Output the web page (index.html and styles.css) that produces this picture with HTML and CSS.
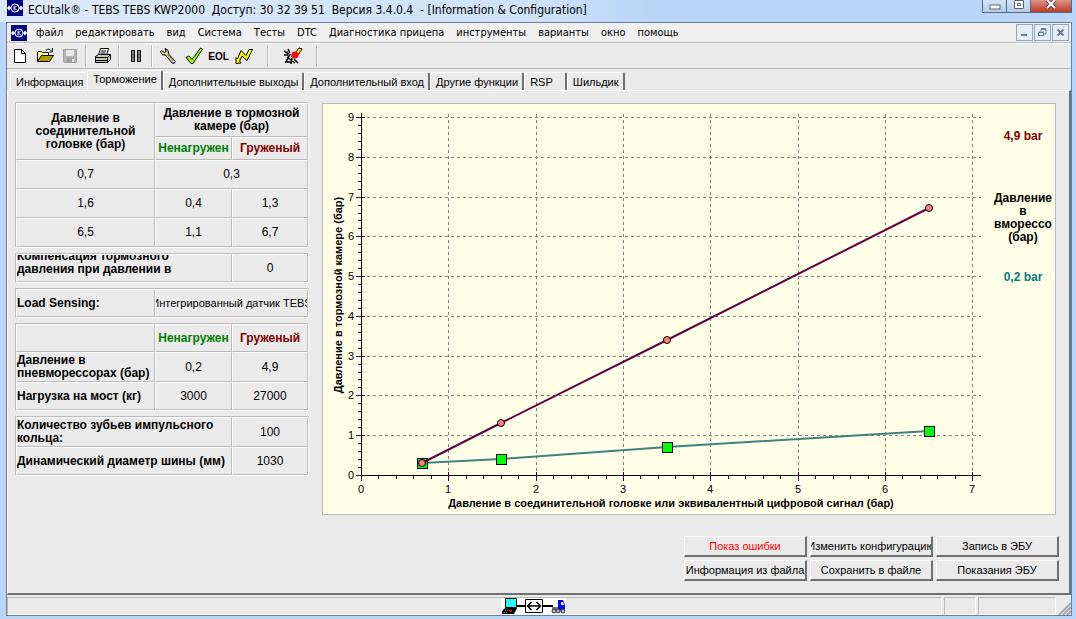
FILE: index.html
```html
<!DOCTYPE html>
<html lang="ru">
<head>
    <meta charset="UTF-8">
    <meta name="viewport" content="width=device-width, initial-scale=1.0">
    <title>ECUtalk - Information &amp; Configuration</title>
    <link rel="stylesheet" href="styles.css">
</head>
<body>
    <!-- logo shared by title bar and menu -->
    <svg class="defs" width="0" height="0" aria-hidden="true">
        <symbol id="logo" viewBox="0 0 16 16">
            <rect width="16" height="16" fill="#00007c"/>
            <circle cx="8" cy="8" r="4" fill="none" stroke="#fff" stroke-width="1"/>
            <path d="M7 5.500v5M10 5.500L7.500 8L10 10.500" fill="none" stroke="#fff"/>
            <path d="M0 8l2-2.500L4 8l-2 2.500zM12 8l2-2.500L16 8l-2 2.500z" fill="#fff"/>
        </symbol>
    </svg>

    <header class="titlebar">
        <svg class="logo"><use href="#logo"/></svg>
        <h1>ECUtalk® - TEBS TEBS KWP2000&nbsp; Доступ: 30 32 39 51&nbsp; Версия 3.4.0.4&nbsp; - [Information &amp; Configuration]</h1>
        <div class="win-buttons">
            <button class="win-btn" aria-label="Свернуть"><svg width="12" height="12"><rect x="1" y="5" width="10" height="4" fill="#fff" stroke="#5a6478"/></svg></button>
            <button class="win-btn" aria-label="Развернуть"><svg width="12" height="12"><path d="M1.500 .5h9v8h-9zM4.500 3.500h3v2h-3z" fill="#fff" stroke="#5a6478"/></svg></button>
            <button class="win-btn close" aria-label="Закрыть"><svg width="12" height="12"><path d="M2 0l8 8M10 0L2 8" stroke="#6a4050" stroke-width="4"/><path d="M2 0l8 8M10 0L2 8" stroke="#fff" stroke-width="2"/></svg></button>
        </div>
    </header>

    <div class="window">
        <nav class="menu">
            <svg class="logo"><use href="#logo"/></svg>
            <button>файл</button>
            <button>редактировать</button>
            <button>вид</button>
            <button>Система</button>
            <button>Тесты</button>
            <button>DTC</button>
            <button>Диагностика прицепа</button>
            <button>инструменты</button>
            <button>варианты</button>
            <button>окно</button>
            <button>помощь</button>
            <div class="mdi-buttons">
                <button class="mdi-btn" aria-label="Свернуть окно"><svg width="9" height="9"><path d="M1 7h6" stroke="#6c7c90" stroke-width="2"/></svg></button>
                <button class="mdi-btn" aria-label="Восстановить окно"><svg width="9" height="9"><path d="M.5 4.500h5v3h-5zM.5 4h5M3 2.500V1h5v5H6" fill="none" stroke="#6c7c90"/><path d="M3 1h5" stroke="#6c7c90" stroke-width="2"/></svg></button>
                <button class="mdi-btn" aria-label="Закрыть окно"><svg width="9" height="9"><path d="M1.500 1.500l6 6M7.500 1.500l-6 6" stroke="#6c7c90" stroke-width="2"/></svg></button>
            </div>
        </nav>

        <div class="toolbar">
            <button class="tool" aria-label="Новый"><svg width="18" height="18"><path d="M3.500 2.500h7l4 4v9h-11z" fill="#fff" stroke="#000"/><path d="M10.500 2.500v4h4" fill="none" stroke="#000"/></svg></button>
            <button class="tool" aria-label="Открыть"><svg width="18" height="18"><path d="M1.500 14.500v-9l1-1h3l1 1h6v3" fill="#ffff80" stroke="#000"/><path d="M1.500 14.500l4-6h12l-4 6z" fill="#b0a000" stroke="#000"/><path d="M10 3.500q3-3 5.500 .5M16.500 1v4h-3" fill="none" stroke="#000"/></svg></button>
            <button class="tool" aria-label="Сохранить"><svg width="18" height="18"><path d="M2.500 2.500h13v13h-12l-1-1z" fill="#b4b4b4" stroke="#a0a0a0"/><path d="M5 3h8v6H5z" fill="#e8e8e8"/><path d="M6 11h7v4H6z" fill="#a0a0a0"/><path d="M11 12h2v3h-2z" fill="#fff"/></svg></button>
            <span class="sep"></span>
            <button class="tool" aria-label="Печать"><svg width="18" height="18"><path d="M4.500 8l2-6.500h8l-2 6.500z" fill="#fff" stroke="#000"/><path d="M7 4h5M6.500 6h5" stroke="#000"/><path d="M1.500 9.500l3-2h12v5l-3 3h-12z" fill="#c8c8c8" stroke="#000"/><path d="M1.500 10.500h12l3-3M13.500 10.500v5M2 13.500h11" fill="none" stroke="#000"/><path d="M9 12h3" stroke="#cc0"/></svg></button>
            <span class="sep"></span>
            <button class="tool" aria-label="Пауза"><svg width="18" height="18"><path d="M4.500 3.500h3v11h-3zM10.500 3.500h3v11h-3z" fill="#777" stroke="#000"/></svg></button>
            <span class="sep"></span>
            <button class="tool" aria-label="Настройка"><svg width="18" height="18"><path d="M5 1.500l3 2 1 4 6.500 7-1.500 2-2-.5-6-7.500-4-1-1.500-3 1-1 3 2 1.500-1z" fill="#d0d0a0" stroke="#000"/><path d="M7.500 7.500l6 7" stroke="#808040"/></svg></button>
            <button class="tool" aria-label="Проверка"><svg width="20" height="18"><path d="M2 10.500l3-1.500 3 3.500L16.500 1l2 1L9 16.500H7z" fill="#9f0" stroke="#000"/></svg></button>
            <button class="tool eol">EOL</button>
            <button class="tool" aria-label="Связь"><svg width="18" height="18"><path d="M1 16.500v-6l1.500 1.500L6 3.500l5 5 3-6h3.500L12 13.500 7 9l-2.500 5L6 16z" fill="#ff0" stroke="#000"/></svg></button>
            <span class="sep wide"></span>
            <button class="tool" aria-label="Стереть"><svg width="20" height="18"><path d="M12 6l4-5 3 1-4 6z" fill="#ff0" stroke="#000"/><path d="M15 2l3 2" stroke="#f80"/><path d="M1 4l5 3M5 2l2 4M1 8h4M7 7l-4 8M9 11l-1 6M4 10l8 6M2 15h6M11 12l4 4" stroke="#000" stroke-width="1.500"/><path d="M4 4l5 6" stroke="#666"/><circle cx="12" cy="8" r="3.500" fill="#f00"/></svg></button>
            <span class="sep wide"></span>
        </div>

        <div class="tabs">
            <button class="tab plain">Информация</button>
            <button class="tab active">Торможение</button>
            <button class="tab">Дополнительные выходы</button>
            <button class="tab">Дополнительный вход</button>
            <button class="tab">Другие функции</button>
            <button class="tab short">RSP</button>
            <button class="tab">Шильдик</button>
        </div>

        <main class="page">
            <div class="content">
                <div class="tables">
                    <table class="braking">
                        <colgroup><col class="c1"><col class="c2"><col class="c3"></colgroup>
                        <tr class="head"><th rowspan="2">Давление в соединительной головке (бар)</th><th colspan="2">Давление в тормозной камере (бар)</th></tr>
                        <tr class="sub"><th class="green">Ненагружен</th><th class="red">Груженый</th></tr>
                        <tr><td>0,7</td><td colspan="2">0,3</td></tr>
                        <tr><td>1,6</td><td>0,4</td><td>1,3</td></tr>
                        <tr><td>6,5</td><td>1,1</td><td>6,7</td></tr>
                    </table>

                    <table>
                        <colgroup><col class="c12"><col class="c3"></colgroup>
                        <tr><th class="left"><div class="clip">Компенсация тормозного<br>давления при давлении в</div></th><td>0</td></tr>
                    </table>

                    <table>
                        <colgroup><col class="c1"><col class="c23"></colgroup>
                        <tr><th class="left">Load Sensing:</th><td><div class="overflow">Интегрированный датчик TEBS</div></td></tr>
                    </table>

                    <table>
                        <colgroup><col class="c1"><col class="c2"><col class="c3"></colgroup>
                        <tr><th></th><th class="green">Ненагружен</th><th class="red">Груженый</th></tr>
                        <tr class="tall"><th class="left">Давление в пневморессорах (бар)</th><td>0,2</td><td>4,9</td></tr>
                        <tr><th class="left">Нагрузка на мост (кг)</th><td>3000</td><td>27000</td></tr>
                    </table>

                    <table>
                        <colgroup><col class="c12"><col class="c3"></colgroup>
                        <tr class="tall"><th class="left">Количество зубьев импульсного кольца:</th><td>100</td></tr>
                        <tr><th class="left">Динамический диаметр шины (мм)</th><td>1030</td></tr>
                    </table>
                </div>

                <div class="chart">
                    <svg class="plot" viewBox="0 0 668 410">
                        <!-- grid -->
                        <g class="grid">
                            <path d="M44 13.500H658M44 53.500H658M44 93.500H658M44 132.500H658M44 172.500H658M44 212.500H658M44 252.500H658M44 291.500H658M44 331.500H658"/>
                            <path d="M125.500 10V368M213.500 10V368M300.500 10V368M387.500 10V368M475.500 10V368M562.500 10V368M649.500 10V368"/>
                        </g>
                        <!-- ticks -->
                        <g class="ticks">
                            <path d="M33 13.500h9M33 53.500h9M33 93.500h9M33 132.500h9M33 172.500h9M33 212.500h9M33 252.500h9M33 291.500h9M33 331.500h9M33 371.500h9"/>
                            <path d="M35 21.500h4M35 29.500h4M35 37.500h4M35 45.500h4M35 61.500h4M35 69.500h4M35 77.500h4M35 85.500h4M35 101.500h4M35 109.500h4M35 116.500h4M35 124.500h4M35 140.500h4M35 148.500h4M35 156.500h4M35 164.500h4M35 180.500h4M35 188.500h4M35 196.500h4M35 204.500h4M35 220.500h4M35 228.500h4M35 236.500h4M35 244.500h4M35 260.500h4M35 268.500h4M35 275.500h4M35 283.500h4M35 299.500h4M35 307.500h4M35 315.500h4M35 323.500h4M35 339.500h4M35 347.500h4M35 355.500h4M35 363.500h4"/>
                            <path d="M38.500 368v9M125.500 368v9M213.500 368v9M300.500 368v9M387.500 368v9M475.500 368v9M562.500 368v9M649.500 368v9"/>
                            <path d="M55.500 371v4M73.500 371v4M90.500 371v4M108.500 371v4M143.500 371v4M160.500 371v4M178.500 371v4M195.500 371v4M230.500 371v4M248.500 371v4M265.500 371v4M283.500 371v4M317.500 371v4M335.500 371v4M352.500 371v4M370.500 371v4M405.500 371v4M422.500 371v4M440.500 371v4M457.500 371v4M492.500 371v4M510.500 371v4M527.500 371v4M545.500 371v4M579.500 371v4M597.500 371v4M614.500 371v4M632.500 371v4"/>
                        </g>
                        <path class="axis" d="M38.500 9V371.500H658"/>
                        <g class="nums end">
                            <text x="31" y="17">9</text><text x="31" y="57">8</text><text x="31" y="97">7</text><text x="31" y="136">6</text><text x="31" y="176">5</text>
                            <text x="31" y="216">4</text><text x="31" y="256">3</text><text x="31" y="295">2</text><text x="31" y="335">1</text><text x="31" y="375">0</text>
                        </g>
                        <g class="nums mid">
                            <text x="38" y="389">0</text><text x="125" y="389">1</text><text x="213" y="389">2</text><text x="300" y="389">3</text>
                            <text x="387" y="389">4</text><text x="475" y="389">5</text><text x="562" y="389">6</text><text x="649" y="389">7</text>
                        </g>
                        <text class="axis-title" x="348" y="403">Давление в соединительной головке или эквивалентный цифровой сигнал (бар)</text>
                        <text class="axis-title" transform="translate(19 191) rotate(-90)">Давление в тормозной камере (бар)</text>
                        <!-- series -->
                        <polyline class="unladen" points="99,359 178,355 344,343 606,327"/>
                        <g class="squares">
                            <rect x="94.500" y="354.500" width="10" height="10"/><rect x="173.500" y="350.500" width="10" height="10"/><rect x="339.500" y="338.500" width="10" height="10"/><rect x="601.500" y="322.500" width="10" height="10"/>
                        </g>
                        <polyline class="laden" points="99,359 178,319 344,236 606,104"/>
                        <g class="dots">
                            <circle cx="99" cy="359" r="3.500"/><circle cx="178" cy="319" r="3.500"/><circle cx="344" cy="236" r="3.500"/><circle cx="606" cy="104" r="3.500"/>
                        </g>
                    </svg>
                    <div class="legend">
                        <p class="red">4,9 bar</p>
                        <p class="caption">Давление<br>в<br>вморессо<br>(бар)</p>
                        <p class="teal">0,2 bar</p>
                    </div>
                </div>
            </div>

            <div class="actions">
                <button class="error">Показ ошибки</button>
                <button>Изменить конфигурацию</button>
                <button>Запись в ЭБУ</button>
                <button>Информация из файла</button>
                <button>Сохранить в файле</button>
                <button>Показания ЭБУ</button>
            </div>
        </main>

        <footer class="status">
            <div class="pane main">
                <svg class="link" width="65" height="16">
                    <rect width="65" height="16" fill="#fff"/>
                    <path d="M15 8h37" stroke="#000" stroke-width="2"/>
                    <path d="M4.500 .5h11v9h-11z" fill="#0ff" stroke="#000"/>
                    <path d="M6 2l8 6M10 2l4 3M6 5l4 3" stroke="#fff" stroke-dasharray="1 1"/>
                    <path d="M4 10h12l-3 6H1v-3z" fill="#000"/><path d="M4 12.500h7M3 14.500h4" stroke="#888" stroke-dasharray="1 1"/><path d="M9 13h2" stroke="#f00" stroke-width="2"/>
                    <path d="M24.500 1.500h17v13h-17z" fill="#fff" stroke="#000"/>
                    <path d="M27 8h12M30.500 4L26.500 8l4 4M35.500 4l4 4-4 4" fill="none" stroke="#000" stroke-width="1.500"/>
                    <path d="M57 2h5l2 5v6h-7z" fill="#00f"/><path d="M60 4h2l1 3h-3z" fill="#fff"/><path d="M51 9h6v4h-6z" fill="#777"/>
                    <circle cx="53" cy="13" r="2" fill="#bbb" stroke="#333"/><circle cx="57" cy="13" r="2" fill="#bbb" stroke="#333"/><circle cx="62" cy="13" r="2" fill="#bbb" stroke="#333"/>
                </svg>
            </div>
            <div class="pane small"></div>
            <div class="pane medium"></div>
            <svg class="grip" width="13" height="13"><path d="M1 13L13 1M5 13l8-8M9 13l4-4" stroke="#a8a8a8" stroke-width="2"/></svg>
        </footer>
    </div>
</body>
</html>
```
FILE: styles.css
```css
* {
    box-sizing: border-box;
}
body {
    margin: 0;
    min-height: 100vh;
    display: flex;
    flex-direction: column;
    background-color: #b9d6f8;
    font-family: "Liberation Sans", Arial, sans-serif;
    font-size: 11px;
    color: #000;
}
button {
    font: inherit;
    color: inherit;
    margin: 0;
    padding: 0;
    border: 0;
    background: none;
    white-space: nowrap;
}
svg {
    display: block;
    flex: none;
}
.defs {
    position: absolute;
}
.logo {
    width: 16px;
    height: 16px;
}

/* title bar */
.titlebar {
    display: flex;
    align-items: flex-start;
    gap: 5px;
    height: 22px;
    padding: 0 4px 0 7px;
    background: linear-gradient(to right, #dce9f8, #cfe2f8 50%, #b9d6f8 60%);
}
.titlebar h1 {
    flex: 1;
    margin: 0;
    font-family: "DejaVu Sans Condensed", "DejaVu Sans", sans-serif;
    font-size: 12px;
    font-weight: normal;
    line-height: 20px;
    white-space: nowrap;
}
.win-buttons {
    display: flex;
    border: 1px solid #51688a;
    border-top: 0;
}
.win-btn {
    display: flex;
    justify-content: center;
    width: 24px;
    height: 12px;
    border-right: 1px solid #51688a;
    background: linear-gradient(#d5e4f5, #b4cde8);
}
.win-btn.close {
    width: 40px;
    border-right: 0;
    background: linear-gradient(#dc9488, #c03a28);
}

/* window body */
.window {
    flex: 1;
    display: flex;
    flex-direction: column;
    margin: 0 4px 3px 6px;
    border: 1px solid #6d7f99;
    background-color: #eaeaea;
}
.menu {
    display: flex;
    align-items: center;
    gap: 12px;
    height: 20px;
    padding: 0 2px 0 4px;
    background-color: #f0f0f0;
    border-bottom: 1px solid #b8b8b8;
    font-family: "DejaVu Sans Condensed", "DejaVu Sans", sans-serif;
}
.menu .logo {
    margin-right: -3px;
}
.mdi-buttons {
    display: flex;
    gap: 1px;
    margin-left: auto;
}
.mdi-btn {
    display: flex;
    align-items: center;
    justify-content: center;
    width: 17px;
    height: 17px;
    border: 1px solid #93a5bb;
    background-color: #e4eefa;
}

/* toolbar */
.toolbar {
    display: flex;
    align-items: center;
    height: 26px;
    border-top: 1px solid #fff;
    border-bottom: 1px solid #b8b8b8;
}
.tool {
    display: flex;
    align-items: center;
    justify-content: center;
    width: 25px;
    height: 24px;
}
.eol {
    font-size: 10px;
    font-weight: bold;
}
.sep {
    width: 2px;
    height: 22px;
    margin: 0 3px;
    border-left: 1px solid #b8b8b8;
    border-right: 1px solid #fff;
}
.sep.wide {
    margin: 0 11px;
}

/* tabs */
.tabs {
    display: flex;
    align-items: flex-end;
    height: 21px;
    padding-left: 3px;
}
.tab {
    height: 18px;
    padding: 0 4px 0 5px;
    border-top: 1px solid #fff;
    border-left: 1px solid #fff;
    border-right: 2px solid #707070;
    border-radius: 2px 2px 0 0;
}
.tab.plain {
    border-right: 0;
}
.tab.active {
    height: 20px;
    padding-bottom: 3px;
}
.tab.short {
    padding-right: 12px;
}

/* page */
.page {
    flex: 1;
    display: flex;
    flex-direction: column;
    justify-content: space-between;
    padding: 11px 10px 12px 7px;
    border: 1px solid #fff;
    border-right: 2px solid #707070;
    border-bottom: 2px solid #707070;
}
.content {
    display: flex;
    align-items: flex-start;
    gap: 13px;
    padding-right: 3px;
}
.tables {
    flex: none;
    display: flex;
    flex-direction: column;
    gap: 5px;
    width: 294px;
}
table {
    width: 100%;
    table-layout: fixed;
    border-collapse: separate;
    border-spacing: 0;
    border: 1px solid #fff;
    border-top-color: #bbb;
    border-left-color: #bbb;
}
.c1 {
    width: 139px;
}
.c2 {
    width: 77px;
}
.c3 {
    width: 76px;
}
.c12 {
    width: 216px;
}
.c23 {
    width: 153px;
}
tr {
    height: 28px;
}
.tall {
    height: 30px;
}
.braking tr {
    height: 29px;
}
.braking .head {
    height: 34px;
}
.braking .sub {
    height: 23px;
}
th, td {
    padding: 0;
    border: 1px solid #bbb;
    border-top-color: #fff;
    border-left-color: #fff;
    font-size: 12px;
    line-height: 13px;
    text-align: center;
}
th.left {
    text-align: left;
}
.clip {
    display: flex;
    align-items: flex-end;
    height: 21px;
    margin-bottom: 5px;
    overflow: hidden;
}
.overflow {
    display: flex;
    justify-content: center;
    overflow: hidden;
    font-size: 11px;
    white-space: nowrap;
}
.green {
    color: #008000;
}
.red {
    color: #800000;
}
.teal {
    color: #008080;
}

/* chart */
.chart {
    flex: 1;
    display: flex;
    margin-top: 1px;
    border: 1px solid #bbb;
    background-color: #ffffe8;
}
.plot {
    flex: 1;
    min-width: 0;
}
.grid path {
    fill: none;
    stroke: #808080;
    stroke-dasharray: 3 3;
}
.ticks path {
    stroke: #400040;
}
.axis {
    fill: none;
    stroke: #000;
}
.nums {
    font-size: 11px;
}
.end {
    text-anchor: end;
}
.mid {
    text-anchor: middle;
}
.axis-title {
    font-size: 11px;
    font-weight: bold;
    text-anchor: middle;
}
.unladen {
    fill: none;
    stroke: #408080;
    stroke-width: 2;
}
.laden {
    fill: none;
    stroke: #600040;
    stroke-width: 2;
}
.squares rect {
    fill: #0f0;
    stroke: #000;
}
.dots circle {
    fill: #ff8080;
    stroke: #000;
}
.legend {
    display: flex;
    flex-direction: column;
    gap: 49px;
    width: 64px;
    padding-top: 26px;
    font-size: 12px;
    font-weight: bold;
    line-height: 13px;
    text-align: center;
}
.legend p {
    margin: 0;
}
.legend .teal {
    margin-top: -22px;
}

/* action buttons */
.actions {
    display: grid;
    grid-template-columns: repeat(3, 123px);
    gap: 3px;
    justify-content: end;
}
.actions button {
    display: flex;
    align-items: center;
    justify-content: center;
    height: 21px;
    overflow: hidden;
    border: 1px solid #fff;
    border-right: 2px solid #707070;
    border-bottom: 2px solid #707070;
}
.actions .error {
    color: #f00;
}

/* status bar */
.status {
    display: flex;
    gap: 2px;
    height: 20px;
    padding-top: 2px;
}
.pane {
    border: 1px solid #fff;
    border-top-color: #bbb;
    border-left-color: #bbb;
}
.pane.main {
    flex: 1;
    display: flex;
    justify-content: center;
    padding-left: 118px;
}
.pane.small {
    width: 32px;
}
.pane.medium {
    width: 78px;
}
.grip {
    align-self: flex-end;
}
```
